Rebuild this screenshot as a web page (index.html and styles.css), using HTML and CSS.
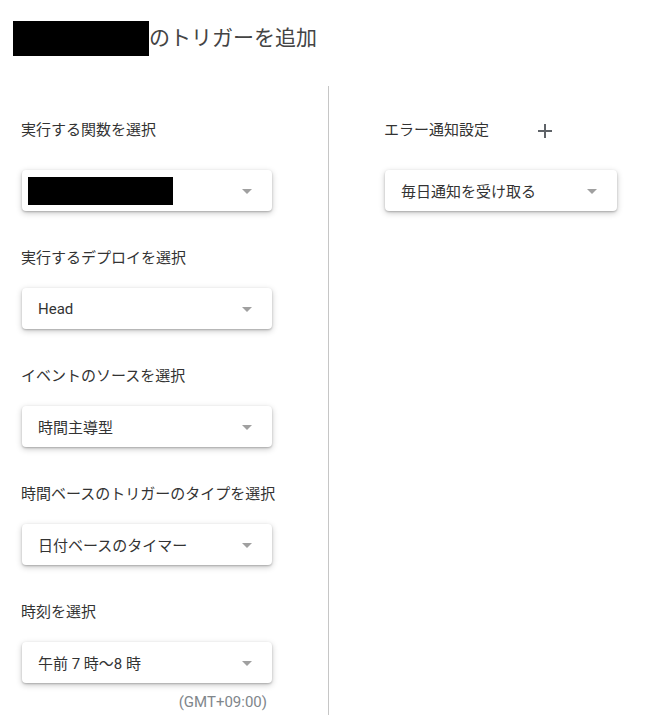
FILE: index.html
```html
<!DOCTYPE html>
<html lang="ja">
<head>
<meta charset="utf-8">
<title>トリガーを追加</title>
<link rel="stylesheet" href="styles.css">
</head>
<body>
<header class="title">
  <span class="redact redact-title"></span>
  <span class="title-text">のトリガーを追加</span>
</header>
<main class="main">
  <section class="col col-left">
    <div class="field field-first">
      <div class="label">実行する関数を選択</div>
      <div class="select"><span class="redact redact-select"></span><span class="arrow"></span></div>
    </div>
    <div class="field">
      <div class="label">実行するデプロイを選択</div>
      <div class="select"><span class="value">Head</span><span class="arrow"></span></div>
    </div>
    <div class="field">
      <div class="label">イベントのソースを選択</div>
      <div class="select"><span class="value">時間主導型</span><span class="arrow"></span></div>
    </div>
    <div class="field">
      <div class="label">時間ベースのトリガーのタイプを選択</div>
      <div class="select"><span class="value">日付ベースのタイマー</span><span class="arrow"></span></div>
    </div>
    <div class="field field-last">
      <div class="label">時刻を選択</div>
      <div class="select"><span class="value">午前 7 時～8 時</span><span class="arrow"></span></div>
      <div class="tz">(GMT+09:00)</div>
    </div>
  </section>
  <section class="col col-right">
    <div class="field field-first">
      <div class="label label-row">エラー通知設定
        <svg class="plus" width="14" height="14" viewBox="0 0 14 14" aria-hidden="true"><path d="M7 0v14M0 7h14" stroke="#5f6368" stroke-width="2" fill="none"/></svg>
      </div>
      <div class="select select-right"><span class="value">毎日通知を受け取る</span><span class="arrow"></span></div>
    </div>
  </section>
</main>
</body>
</html>
```

FILE: styles.css
```css
* { box-sizing: border-box; }
html, body { margin: 0; padding: 0; background: #fff; }
body {
  width: 659px;
  height: 721px;
  overflow: hidden;
  font-family: Roboto, "Noto Sans CJK JP", sans-serif;
  color: #333;
}
.title {
  display: flex;
  align-items: center;
  margin: 21px 0 0 13px;
  height: 35px;
}
.redact { display: inline-block; background: #000; }
.redact-title { width: 136px; height: 35px; }
.title-text {
  font-size: 21px;
  color: #444;
  line-height: 35px;
}
.main {
  display: flex;
  margin-top: 30px;
  height: 629px;
}
.col { padding-top: 34px; }
.col-left {
  width: 329px;
  padding-left: 21px;
  border-right: 1px solid #c6c6c6;
}
.col-right { padding-left: 55px; }
.field { margin-bottom: 37px; }
.label {
  font-size: 15px;
  line-height: 20px;
  height: 20px;
  margin-bottom: 20px;
  color: #333;
  white-space: nowrap;
}
.field-first .label { margin-bottom: 30px; }
.label-row { display: flex; align-items: center; }
.plus { margin-left: 49px; margin-top: 1px; }
.select {
  display: flex;
  align-items: center;
  justify-content: space-between;
  width: 250px;
  height: 41px;
  margin-left: 1px;
  padding: 0 20px 0 16px;
  background: #fff;
  border-radius: 4px;
  box-shadow: 0 1px 2px rgba(0,0,0,0.22), 0 2px 6px rgba(0,0,0,0.22);
}
.select-right { width: 232px; }
.value { font-size: 15px; color: #333; white-space: nowrap; }
.redact-select { width: 145px; height: 28px; margin-left: -10px; }
.arrow {
  width: 0;
  height: 0;
  border-left: 5px solid transparent;
  border-right: 5px solid transparent;
  border-top: 5px solid #a0a0a0;
  margin-top: 2px;
}
.tz {
  width: 251px;
  text-align: right;
  padding-right: 5px;
  margin-top: 9px;
  font-size: 15px;
  line-height: 20px;
  color: #80868b;
}
```
